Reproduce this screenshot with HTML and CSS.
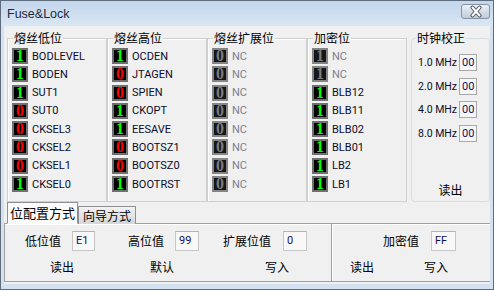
FILE: index.html
```html
<!DOCTYPE html>
<html lang="zh-CN">
<head>
    <meta charset="UTF-8">
    <title>Fuse&amp;Lock</title>
    <link rel="stylesheet" href="styles.css">
</head>
<body>
    <div id="window">
        <div id="titleBar">
            <span class="title">Fuse&amp;Lock</span>
            <button class="close-btn" title="关闭">
                <svg width="26" height="13" viewBox="0 0 26 13"><path d="M9.5 2.5 L16.5 10.5 M16.5 2.5 L9.5 10.5" stroke="#4f5a66" stroke-width="4" stroke-linecap="round"/><path d="M9.5 2.5 L16.5 10.5 M16.5 2.5 L9.5 10.5" stroke="#ffffff" stroke-width="2" stroke-linecap="round"/></svg>
            </button>
        </div>

        <div id="client">
            <div class="groups">
                <fieldset class="group">
                    <legend>熔丝低位</legend>
                    <div class="bit-row"><span class="bit on">1</span><span class="bit-name">BODLEVEL</span></div>
                    <div class="bit-row"><span class="bit on">1</span><span class="bit-name">BODEN</span></div>
                    <div class="bit-row"><span class="bit on">1</span><span class="bit-name">SUT1</span></div>
                    <div class="bit-row"><span class="bit off">0</span><span class="bit-name">SUT0</span></div>
                    <div class="bit-row"><span class="bit off">0</span><span class="bit-name">CKSEL3</span></div>
                    <div class="bit-row"><span class="bit off">0</span><span class="bit-name">CKSEL2</span></div>
                    <div class="bit-row"><span class="bit off">0</span><span class="bit-name">CKSEL1</span></div>
                    <div class="bit-row"><span class="bit on">1</span><span class="bit-name">CKSEL0</span></div>
                </fieldset>

                <fieldset class="group">
                    <legend>熔丝高位</legend>
                    <div class="bit-row"><span class="bit on">1</span><span class="bit-name">OCDEN</span></div>
                    <div class="bit-row"><span class="bit off">0</span><span class="bit-name">JTAGEN</span></div>
                    <div class="bit-row"><span class="bit off">0</span><span class="bit-name">SPIEN</span></div>
                    <div class="bit-row"><span class="bit on">1</span><span class="bit-name">CKOPT</span></div>
                    <div class="bit-row"><span class="bit on">1</span><span class="bit-name">EESAVE</span></div>
                    <div class="bit-row"><span class="bit off">0</span><span class="bit-name">BOOTSZ1</span></div>
                    <div class="bit-row"><span class="bit off">0</span><span class="bit-name">BOOTSZ0</span></div>
                    <div class="bit-row"><span class="bit on">1</span><span class="bit-name">BOOTRST</span></div>
                </fieldset>

                <fieldset class="group">
                    <legend>熔丝扩展位</legend>
                    <div class="bit-row"><span class="bit na">0</span><span class="bit-name nc">NC</span></div>
                    <div class="bit-row"><span class="bit na">0</span><span class="bit-name nc">NC</span></div>
                    <div class="bit-row"><span class="bit na">0</span><span class="bit-name nc">NC</span></div>
                    <div class="bit-row"><span class="bit na">0</span><span class="bit-name nc">NC</span></div>
                    <div class="bit-row"><span class="bit na">0</span><span class="bit-name nc">NC</span></div>
                    <div class="bit-row"><span class="bit na">0</span><span class="bit-name nc">NC</span></div>
                    <div class="bit-row"><span class="bit na">0</span><span class="bit-name nc">NC</span></div>
                    <div class="bit-row"><span class="bit na">0</span><span class="bit-name nc">NC</span></div>
                </fieldset>

                <fieldset class="group">
                    <legend>加密位</legend>
                    <div class="bit-row"><span class="bit na">1</span><span class="bit-name nc">NC</span></div>
                    <div class="bit-row"><span class="bit na">1</span><span class="bit-name nc">NC</span></div>
                    <div class="bit-row"><span class="bit on">1</span><span class="bit-name">BLB12</span></div>
                    <div class="bit-row"><span class="bit on">1</span><span class="bit-name">BLB11</span></div>
                    <div class="bit-row"><span class="bit on">1</span><span class="bit-name">BLB02</span></div>
                    <div class="bit-row"><span class="bit on">1</span><span class="bit-name">BLB01</span></div>
                    <div class="bit-row"><span class="bit on">1</span><span class="bit-name">LB2</span></div>
                    <div class="bit-row"><span class="bit on">1</span><span class="bit-name">LB1</span></div>
                </fieldset>

                <fieldset class="clock-group">
                    <legend>时钟校正</legend>
                    <div class="clk-row"><span class="clk-label">1.0 MHz</span><span class="clk-edit">00</span></div>
                    <div class="clk-row"><span class="clk-label">2.0 MHz</span><span class="clk-edit">00</span></div>
                    <div class="clk-row"><span class="clk-label">4.0 MHz</span><span class="clk-edit">00</span></div>
                    <div class="clk-row"><span class="clk-label">8.0 MHz</span><span class="clk-edit">00</span></div>
                    <div class="clk-read">读出</div>
                </fieldset>
            </div>

            <div class="tabs">
                <div class="tab active">位配置方式</div>
                <div class="tab">向导方式</div>
            </div>

            <div class="panel">
                <div class="panel-left">
                    <div class="panel-row">
                        <span class="field-label">低位值</span><span class="edit low">E1</span>
                        <span class="field-label high-label">高位值</span><span class="edit high">99</span>
                        <span class="field-label ext-label">扩展位值</span><span class="edit ext">0</span>
                    </div>
                    <div class="action-row">
                        <span class="action read">读出</span>
                        <span class="action default">默认</span>
                        <span class="action write">写入</span>
                    </div>
                </div>
                <div class="panel-right">
                    <div class="panel-row lock-row">
                        <span class="field-label">加密值</span><span class="edit lock">FF</span>
                    </div>
                    <div class="action-row lock-actions">
                        <span class="action">读出</span>
                        <span class="action lock-write">写入</span>
                    </div>
                </div>
            </div>
        </div>
    </div>
</body>
</html>
```

FILE: styles.css
```css
body {
    margin: 0;
    font-family: "Noto Sans CJK SC", sans-serif;
    font-size: 12px;
    color: #000;
}

#window {
    width: 494px;
    height: 290px;
    box-sizing: border-box;
    border: 1px solid #5f6c7b;
    background: #d3e1f1;
    display: flex;
    flex-direction: column;
}

#titleBar {
    height: 25px;
    flex-shrink: 0;
    display: flex;
    align-items: center;
    padding-left: 6px;
    background: linear-gradient(#c3d6ec, #d9e6f4);
}

.title {
    font-family: "Liberation Sans", sans-serif;
    font-size: 12.5px;
    color: #1e2935;
}

.close-btn {
    margin-left: auto;
    margin-right: 3px;
    align-self: flex-start;
    margin-top: 3px;
    width: 29px;
    height: 15px;
    padding: 0;
    border: 1px solid #8593a3;
    border-radius: 3px;
    background: linear-gradient(#eef2f7, #d4dce6 50%, #c3cdd9);
    display: flex;
    align-items: center;
    justify-content: center;
}

#client {
    margin: 0 3px;
    height: 258px;
    flex-shrink: 0;
    background: #f0f0f0;
}

.groups {
    display: flex;
    height: 171px;
    margin: 5px 0 0 3px;
}

.group {
    margin: 0;
    min-width: 0;
    width: 100px;
    box-sizing: border-box;
    padding: 3px 0 0 4px;
    border: 1px solid #d0d0d0;
    box-shadow: inset 1px 1px 0 #fff;
    display: flex;
    flex-direction: column;
    gap: 2.3px;
}

.group legend,
.clock-group legend {
    padding: 0 1px;
    margin-left: 1px;
    font-size: 12px;
    line-height: 14px;
    background: #f0f0f0;
}

.bit-row {
    display: flex;
    align-items: center;
    height: 16px;
    gap: 4px;
}

.bit {
    width: 16px;
    height: 16px;
    box-sizing: border-box;
    border: 2px solid #707070;
    background: #000;
    font-family: "Liberation Serif", serif;
    font-weight: bold;
    font-size: 16px;
    line-height: 12px;
    text-align: center;
}

.bit.on { color: #00ff00; }
.bit.off { color: #ff0000; }
.bit.na {
    color: #7c7c7c;
    background: #161616;
    border-color: #858585;
}

.bit-name {
    font-family: Roboto, "Liberation Sans", sans-serif;
    font-size: 11px;
    color: #0c0c28;
}

.bit-name.nc { color: #7e7e8e; }

.clock-group {
    margin: 0 0 0 4px;
    min-width: 0;
    width: 79px;
    box-sizing: border-box;
    padding: 9px 0 4px 0;
    border: 1px solid #d5dfe5;
    border-radius: 4px;
    display: flex;
    flex-direction: column;
    gap: 6.7px;
}

.clock-group legend { margin-left: 4px; }

.clk-row {
    display: flex;
    align-items: center;
    height: 17px;
    margin-left: 6px;
}

.clk-label {
    width: 41px;
    white-space: nowrap;
    font-family: Roboto, "Liberation Sans", sans-serif;
    font-size: 10.5px;
    color: #0c0c28;
}

.clk-edit {
    width: 18px;
    height: 17px;
    box-sizing: border-box;
    border: 1px solid #a8a8a8;
    background: #f6f6f6;
    padding-left: 2px;
    font-family: Roboto, "Liberation Sans", sans-serif;
    font-size: 11px;
    line-height: 15px;
    color: #10105a;
}

.clk-read {
    margin-top: auto;
    text-align: center;
    line-height: 14px;
}

.tabs {
    display: flex;
    align-items: flex-end;
    height: 20px;
    margin-top: 1px;
    padding-left: 3px;
    border-bottom: 1px solid #a0a0a0;
}

.tab {
    height: 17px;
    padding: 0 4px;
    margin-bottom: -1px;
    border: 1px solid #8d8f94;
    border-bottom: none;
    background: linear-gradient(#f2f2f2, #e4e4e4 50%, #d6d6d6);
    font-size: 12px;
    line-height: 17px;
}

.tab.active {
    height: 20px;
    padding: 0 2px;
    background: #fbfbfb;
    border-bottom: 1px solid #fbfbfb;
    font-size: 13px;
    line-height: 20px;
}

.panel {
    display: flex;
    height: 57px;
    border-left: 1px solid #a0a0a0;
    border-bottom: 1px solid #a0a0a0;
    box-shadow: inset 0 1px 0 #fff;
}

.panel-left {
    width: 326px;
}

.panel-right {
    flex: 1;
    border-left: 1px solid #a0a0a0;
    box-shadow: inset 1px 0 0 #fff;
}

.panel-row {
    display: flex;
    align-items: center;
    height: 20px;
    margin-top: 7px;
    padding-left: 20px;
}

.field-label { line-height: 14px; }
.high-label { margin-left: 33px; }
.ext-label { margin-left: 24px; }

.edit {
    height: 20px;
    box-sizing: border-box;
    margin-left: 11px;
    border: 1px solid #c6c6c6;
    border-top-color: #b4b4b4;
    background: #f8f8f8;
    padding-left: 3px;
    font-family: Roboto, "Liberation Sans", sans-serif;
    font-size: 11px;
    line-height: 18px;
    color: #10105a;
}

.edit.low { width: 23px; }
.edit.high { width: 24px; }
.edit.ext { width: 24px; margin-left: 12px; }
.edit.lock { width: 25px; margin-left: 12px; }

.action-row {
    display: flex;
    margin-top: 9px;
    padding-left: 45px;
    line-height: 14px;
}

.action.default { margin-left: 76px; }
.action.write { margin-left: 91px; }

.lock-row { padding-left: 51px; }
.lock-actions { padding-left: 18px; }
.lock-write { margin-left: 50px; }
```
